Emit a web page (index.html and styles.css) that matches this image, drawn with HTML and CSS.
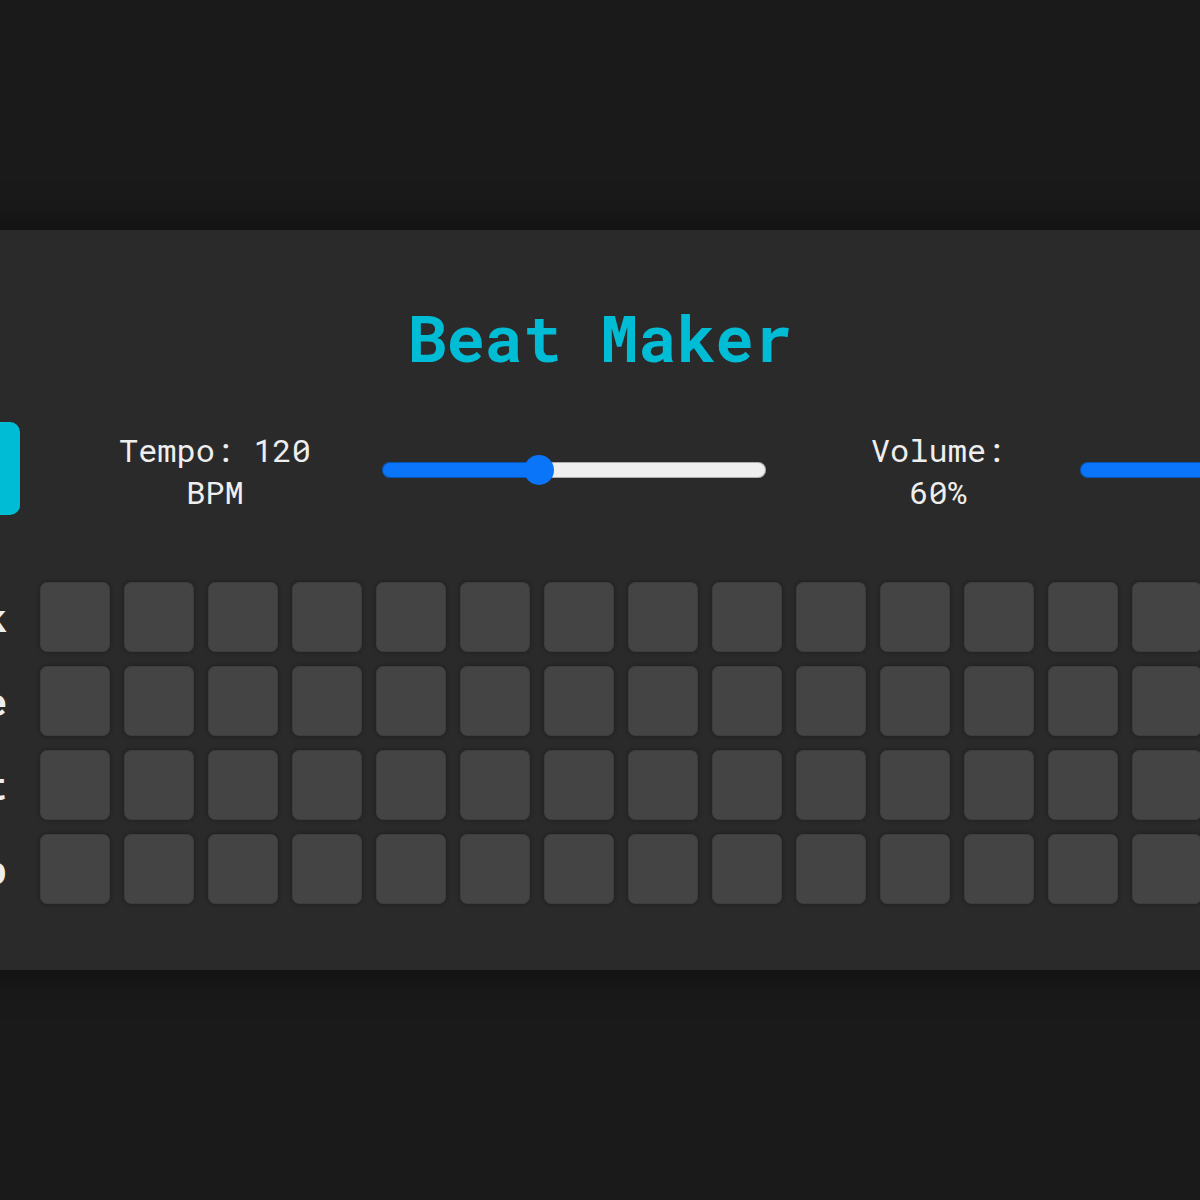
FILE: index.html
```html
<!DOCTYPE html>
<html lang="en">
<head>
<meta charset="utf-8">
<title>Beat Maker</title>
<link rel="stylesheet" href="styles.css">
</head>
<body>
<main class="app">
  <h1 class="title">Beat Maker</h1>
  <div class="controls">
    <button class="btn">Play</button>
    <label class="ctrl-label tempo-label">Tempo: 120 BPM</label>
    <input class="slider tempo-slider" type="range" min="40" max="240" value="120" style="--fill: 41.3%">
    <label class="ctrl-label volume-label">Volume: 60%</label>
    <input class="slider volume-slider" type="range" min="0" max="100" value="60" style="--fill: 59.2%">
    <button class="btn">Clear</button>
  </div>
  <div class="grid">
    <div class="track-row"><span class="track-name">Kick</span><div class="cells"><span class="cell"></span><span class="cell"></span><span class="cell"></span><span class="cell"></span><span class="cell"></span><span class="cell"></span><span class="cell"></span><span class="cell"></span><span class="cell"></span><span class="cell"></span><span class="cell"></span><span class="cell"></span><span class="cell"></span><span class="cell"></span><span class="cell"></span><span class="cell"></span></div></div>
    <div class="track-row"><span class="track-name">Snare</span><div class="cells"><span class="cell"></span><span class="cell"></span><span class="cell"></span><span class="cell"></span><span class="cell"></span><span class="cell"></span><span class="cell"></span><span class="cell"></span><span class="cell"></span><span class="cell"></span><span class="cell"></span><span class="cell"></span><span class="cell"></span><span class="cell"></span><span class="cell"></span><span class="cell"></span></div></div>
    <div class="track-row"><span class="track-name">Hi-Hat</span><div class="cells"><span class="cell"></span><span class="cell"></span><span class="cell"></span><span class="cell"></span><span class="cell"></span><span class="cell"></span><span class="cell"></span><span class="cell"></span><span class="cell"></span><span class="cell"></span><span class="cell"></span><span class="cell"></span><span class="cell"></span><span class="cell"></span><span class="cell"></span><span class="cell"></span></div></div>
    <div class="track-row"><span class="track-name">Clap</span><div class="cells"><span class="cell"></span><span class="cell"></span><span class="cell"></span><span class="cell"></span><span class="cell"></span><span class="cell"></span><span class="cell"></span><span class="cell"></span><span class="cell"></span><span class="cell"></span><span class="cell"></span><span class="cell"></span><span class="cell"></span><span class="cell"></span><span class="cell"></span><span class="cell"></span></div></div>
  </div>
</main>
</body>
</html>
```
FILE: styles.css
```css
html, body {
  margin: 0;
  padding: 0;
}
body {
  background: #1a1a1a;
  height: 1200px;
  overflow: hidden;
  display: flex;
  justify-content: center;
  align-items: center;
  font-family: "Roboto Mono", "DejaVu Sans Mono", "Liberation Mono", monospace;
  color: #eeeeee;
}
.app {
  flex-shrink: 0;
  box-sizing: border-box;
  width: 1800px;
  height: 740px;
  padding: 75px 140px 66px;
  background: #2a2a2a;
  border-radius: 12px;
  box-shadow: 0 0 40px rgba(0, 0, 0, 0.5);
  display: flex;
  flex-direction: column;
}
.title {
  margin: 0 0 53px;
  font-size: 64px;
  line-height: 64px;
  font-weight: 700;
  color: #00bcd4;
  text-align: center;
}
.controls {
  display: flex;
  align-items: center;
  height: 93px;
  margin-bottom: 67px;
}
.btn {
  flex-shrink: 0;
  width: 180px;
  height: 93px;
  border: none;
  border-radius: 10px;
  background: #00bcd4;
  color: #ffffff;
  font-family: inherit;
  font-size: 32px;
  font-weight: 700;
}
.ctrl-label {
  flex-shrink: 0;
  margin-top: 4px;
  font-size: 32px;
  line-height: 42px;
  text-align: center;
  color: #eeeeee;
}
.tempo-label {
  width: 10.1ch;
  margin-left: 98px;
}
.volume-label {
  width: 7.1ch;
  margin-left: 104px;
}
.slider {
  flex-shrink: 0;
  -webkit-appearance: none;
  appearance: none;
  width: 384px;
  height: 30px;
  margin: 3px 0 0;
  background: transparent;
}
.tempo-slider {
  margin-left: 70px;
}
.volume-slider {
  margin-left: 74px;
  margin-right: 80px;
}
.slider::-webkit-slider-runnable-track {
  height: 16px;
  border-radius: 8px;
  background: linear-gradient(to right, #0a75f8 var(--fill), #efefef var(--fill));
  box-shadow: inset 0 0 0 1px rgba(0, 0, 0, 0.28);
}
.slider::-webkit-slider-thumb {
  -webkit-appearance: none;
  appearance: none;
  width: 30px;
  height: 30px;
  margin-top: -7px;
  border: none;
  border-radius: 50%;
  background: #0a75f8;
}
.grid {
  display: flex;
  flex-direction: column;
  gap: 14px;
}
.track-row {
  display: flex;
  align-items: center;
  gap: 14px;
}
.track-name {
  flex-shrink: 0;
  box-sizing: border-box;
  width: 186px;
  padding-right: 19px;
  text-align: right;
  font-size: 38px;
  font-weight: 700;
  color: #eeeeee;
}
.cells {
  display: flex;
  gap: 14px;
}
.cell {
  display: block;
  flex-shrink: 0;
  box-sizing: border-box;
  width: 70px;
  height: 70px;
  border-radius: 7px;
  background: #444444;
  border: 1px solid #3d3d3d;
  box-shadow: 0 0 4px rgba(0, 0, 0, 0.35);
}
```
